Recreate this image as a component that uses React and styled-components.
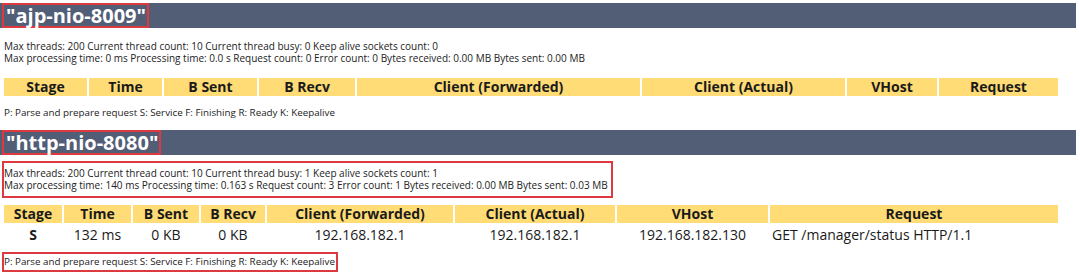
import React from "react";
import styled, { createGlobalStyle } from "styled-components";

const GlobalStyle = createGlobalStyle`
  html, body { margin: 0; padding: 0; background: #ffffff; }
  body { font-family: "Open Sans", "Liberation Sans", sans-serif; color: #1a1a1a; }
`;

const RED = "#dc3a3f";

const Page = styled.div`
  width: 1080px;
  padding-top: 3px;
  display: flex;
  flex-direction: column;
`;

const Section = styled.section`
  display: flex;
  flex-direction: column;
  align-items: flex-start;
  & + & { margin-top: 7px; }
`;

const TitleBar = styled.h1`
  margin: 0 4px 0 0;
  align-self: stretch;
  height: 25px;
  background: #525d76;
  display: flex;
  align-items: stretch;
`;

const Title = styled.span`
  box-sizing: border-box;
  margin-left: 2px;
  padding: 0 1px 0 2px;
  border: 2px solid ${(p) => (p.$mark ? RED : "transparent")};
  color: #ffffff;
  font-family: "Open Sans", sans-serif;
  font-weight: 700;
  font-size: 20px;
  line-height: 21px;
  white-space: nowrap;
`;

const Stats = styled.div`
  margin: 6px 0 0 2px;
  padding: 4px 3px 5px 0;
  border: 2px solid ${(p) => (p.$mark ? RED : "transparent")};
  font-size: 10px;
  line-height: 12px;
  color: #222;
  white-space: nowrap;
`;

const Table = styled.table`
  margin: 5px 0 0 2px;
  border-collapse: separate;
  border-spacing: 2px;
  table-layout: fixed;
  width: 1058px;
`;

const Col = styled.col`
  width: ${(p) => p.$width}px;
`;

const Th = styled.th`
  background: #ffdc75;
  height: 18px;
  padding: 0;
  font-size: 14px;
  font-weight: 700;
  line-height: 18px;
  color: #1a1a1a;
  text-align: center;
  white-space: nowrap;
`;

const Td = styled.td`
  height: 20px;
  padding: 0 0 0 ${(p) => (p.$left ? "2px" : "0")};
  font-size: 14px;
  line-height: 20px;
  font-weight: ${(p) => (p.$bold ? 700 : 400)};
  color: #1a1a1a;
  text-align: ${(p) => (p.$left ? "left" : "center")};
  white-space: nowrap;
`;

const Legend = styled.div`
  margin: 5px 0 0 2px;
  padding: 2px 1px 2px 0;
  border: 2px solid ${(p) => (p.$mark ? RED : "transparent")};
  font-size: 9.8px;
  line-height: 12px;
  color: #222;
  white-space: nowrap;
`;

const HEADERS = ["Stage", "Time", "B Sent", "B Recv", "Client (Forwarded)", "Client (Actual)", "VHost", "Request"];

const connectors = [
  {
    name: "ajp-nio-8009",
    mark: { title: true, stats: false, legend: false },
    lines: [
      "Max threads: 200 Current thread count: 10 Current thread busy: 0 Keep alive sockets count: 0",
      "Max processing time: 0 ms Processing time: 0.0 s Request count: 0 Error count: 0 Bytes received: 0.00 MB Bytes sent: 0.00 MB",
    ],
    widths: [83, 73, 93, 96, 283, 203, 90, 119],
    rows: [],
  },
  {
    name: "http-nio-8080",
    mark: { title: true, stats: true, legend: true },
    lines: [
      "Max threads: 200 Current thread count: 10 Current thread busy: 1 Keep alive sockets count: 1",
      "Max processing time: 140 ms Processing time: 0.163 s Request count: 3 Error count: 1 Bytes received: 0.00 MB Bytes sent: 0.03 MB",
    ],
    widths: [58, 67, 66, 64, 186, 160, 151, 288],
    rows: [
      ["S", "132 ms", "0 KB", "0 KB", "192.168.182.1", "192.168.182.1", "192.168.182.130", "GET /manager/status HTTP/1.1"],
    ],
  },
];

const LEGEND = "P: Parse and prepare request S: Service F: Finishing R: Ready K: Keepalive";

export default function App() {
  return (
    <>
      <GlobalStyle />
      <Page>
        {connectors.map((c) => (
          <Section key={c.name}>
            <TitleBar>
              <Title $mark={c.mark.title}>"{c.name}"</Title>
            </TitleBar>
            <Stats $mark={c.mark.stats}>
              {c.lines.map((l) => (
                <div key={l}>{l}</div>
              ))}
            </Stats>
            <Table>
              <colgroup>
                {c.widths.map((w, i) => (
                  <Col key={i} $width={w} />
                ))}
              </colgroup>
              <thead>
                <tr>
                  {HEADERS.map((h) => (
                    <Th key={h}>{h}</Th>
                  ))}
                </tr>
              </thead>
              <tbody>
                {c.rows.map((r, ri) => (
                  <tr key={ri}>
                    {r.map((v, i) => (
                      <Td key={i} $bold={i === 0} $left={i === 7}>
                        {v}
                      </Td>
                    ))}
                  </tr>
                ))}
              </tbody>
            </Table>
            <Legend $mark={c.mark.legend}>{LEGEND}</Legend>
          </Section>
        ))}
      </Page>
    </>
  );
}
